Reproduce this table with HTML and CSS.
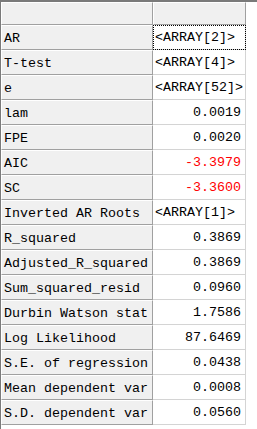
FILE: index.html
```html
<!DOCTYPE html>
<html lang="en">
<head>
    <meta charset="UTF-8">
    <title>Equation Results</title>
    <link rel="stylesheet" href="styles.css">
</head>
<body>
    <div class="sheet">
        <div class="grid">
            <div class="head"></div>
            <div class="head"></div>

            <div class="name">AR</div>
            <div class="val arr focus">&lt;ARRAY[2]&gt;</div>
            <div class="name">T-test</div>
            <div class="val arr">&lt;ARRAY[4]&gt;</div>
            <div class="name">e</div>
            <div class="val arr">&lt;ARRAY[52]&gt;</div>
            <div class="name">lam</div>
            <div class="val">0.0019</div>
            <div class="name">FPE</div>
            <div class="val">0.0020</div>
            <div class="name">AIC</div>
            <div class="val neg">-3.3979</div>
            <div class="name">SC</div>
            <div class="val neg">-3.3600</div>
            <div class="name">Inverted AR Roots</div>
            <div class="val arr">&lt;ARRAY[1]&gt;</div>
            <div class="name">R_squared</div>
            <div class="val">0.3869</div>
            <div class="name">Adjusted_R_squared</div>
            <div class="val">0.3869</div>
            <div class="name">Sum_squared_resid</div>
            <div class="val">0.0960</div>
            <div class="name">Durbin Watson stat</div>
            <div class="val">1.7586</div>
            <div class="name">Log Likelihood</div>
            <div class="val">87.6469</div>
            <div class="name">S.E. of regression</div>
            <div class="val">0.0438</div>
            <div class="name">Mean dependent var</div>
            <div class="val">0.0008</div>
            <div class="name">S.D. dependent var</div>
            <div class="val">0.0560</div>
        </div>
    </div>
</body>
</html>
```

FILE: styles.css
```css
body { margin: 0; background: #fff; font-family: "Liberation Mono", "DejaVu Sans Mono", monospace; font-size: 13.33px; color: #000; }
.sheet { height: 429px; border-top: 2px solid #7a7a7a; border-left: 1px solid #7a7a7a; box-sizing: border-box; }
.grid { display: grid; grid-template-columns: 152px 93px; grid-template-rows: 23px; grid-auto-rows: 25px; }
.grid > div { box-sizing: border-box; display: flex; align-items: center; white-space: nowrap; overflow: hidden; padding-top: 1px; }
.head, .name { background: #f0f0f0; border-top: 1px solid #fff; border-left: 1px solid #fff; border-right: 1px solid #a0a0a0; border-bottom: 1px solid #a0a0a0; }
.name { padding-left: 2px; }
.val { background: #fff; border-right: 1px solid #d4d4d4; border-bottom: 1px solid #d4d4d4; justify-content: flex-end; padding-right: 4px; }
.val.arr { justify-content: flex-start; padding-left: 2px; padding-right: 0; }
.neg { color: #f00; }
.focus { outline: 1px dotted #000; outline-offset: -1px; }
```
